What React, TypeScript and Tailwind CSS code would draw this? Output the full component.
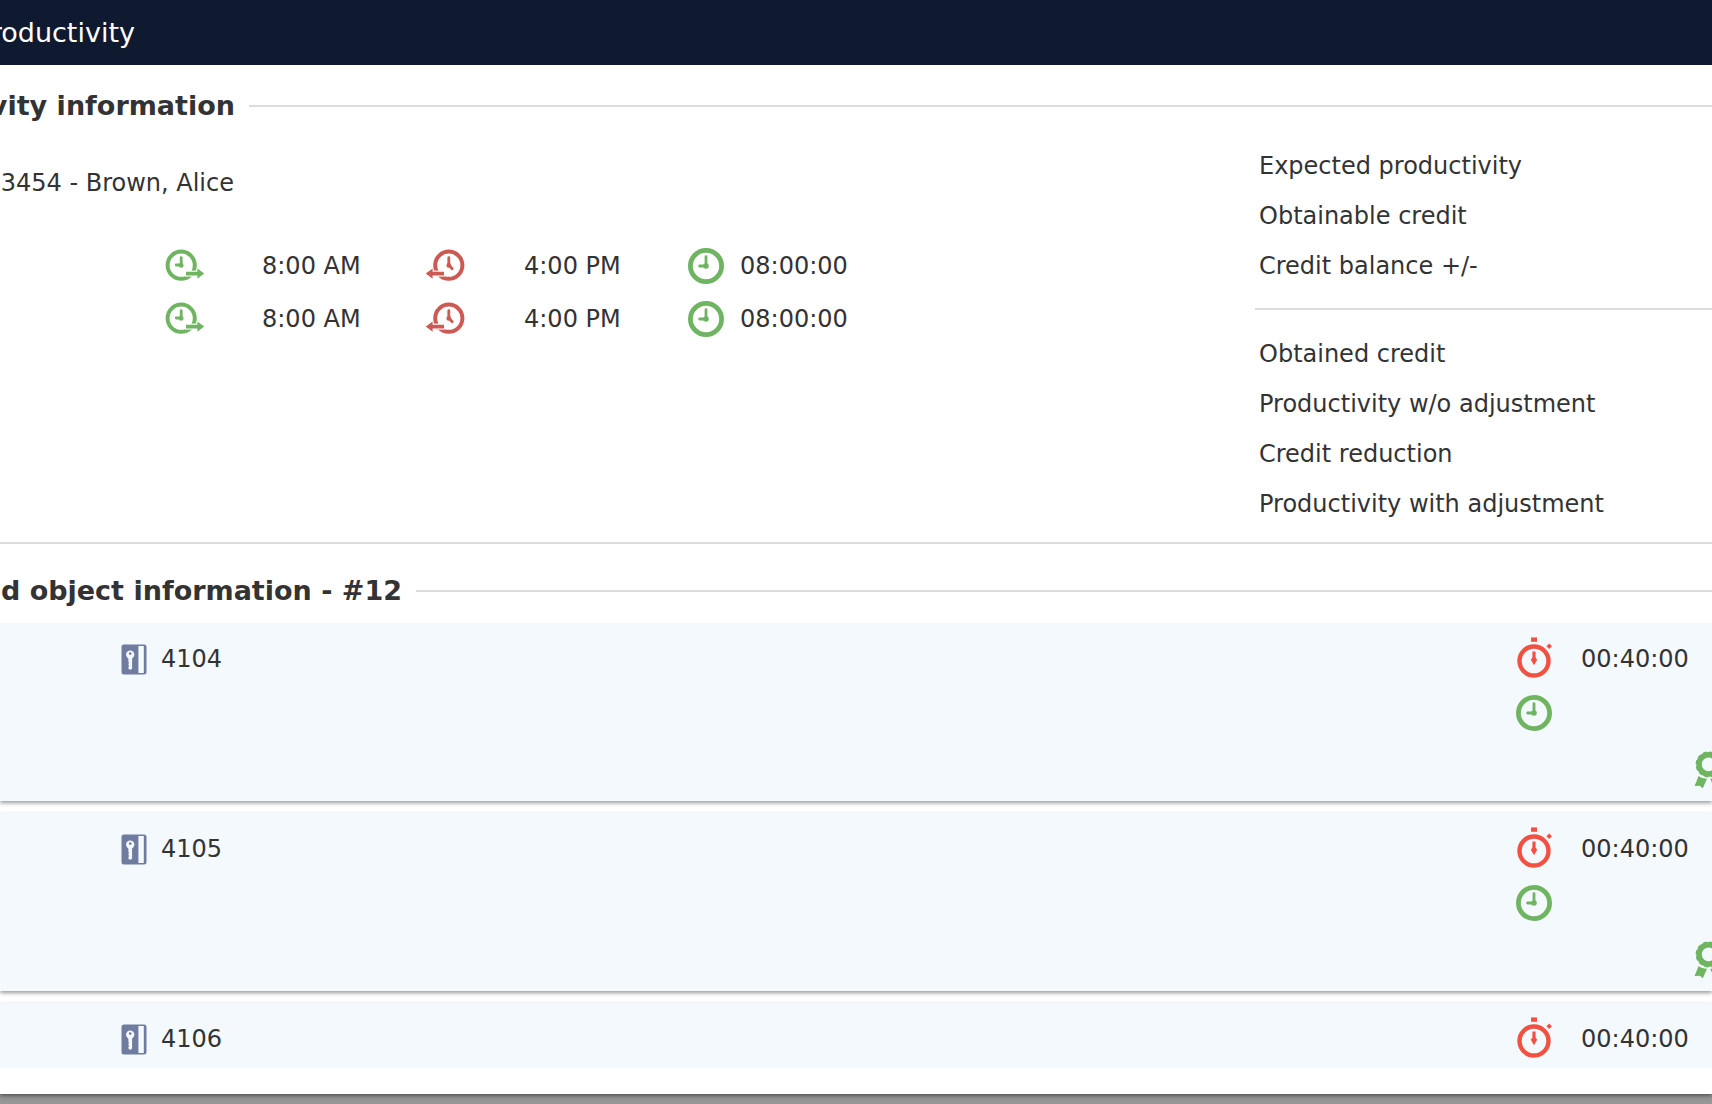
import type { ReactNode } from 'react'

const shifts = [
    { id: 1, start: '8:00 AM', end: '4:00 PM', total: '08:00:00' },
    { id: 2, start: '8:00 AM', end: '4:00 PM', total: '08:00:00' },
]

const expectedLabels = ['Expected productivity', 'Obtainable credit', 'Credit balance +/-']

const obtainedLabels = [
    'Obtained credit',
    'Productivity w/o adjustment',
    'Credit reduction',
    'Productivity with adjustment',
]

const rooms = [
    { number: '4104', time: '00:40:00' },
    { number: '4105', time: '00:40:00' },
    { number: '4106', time: '00:40:00' },
]

const ClockInIcon = () => (
    <svg width="40" height="34" viewBox="0 0 40 34" fill="none" className="text-[#6fb561]">
        <circle cx="16.2" cy="16.2" r="13.6" stroke="currentColor" strokeWidth="4" />
        <path d="M16.2 8.6V16h-5" stroke="currentColor" strokeWidth="2.8" strokeLinecap="round" />
        <circle cx="16.2" cy="16.4" r="2.4" fill="currentColor" />
        <path d="M20 21.6h18v6H20z" fill="white" />
        <path d="M21 22.8h11.4v-3.4l6.8 5.2-6.8 5.2v-3.4H21z" fill="currentColor" />
    </svg>
)

const ClockOutIcon = () => (
    <svg width="40" height="34" viewBox="0 0 40 34" fill="none" className="text-[#cc5a52]">
        <circle cx="23.8" cy="16.2" r="13.6" stroke="currentColor" strokeWidth="4" />
        <path d="M23.8 8.6V16l3.4 3.8" stroke="currentColor" strokeWidth="2.8" strokeLinecap="round" />
        <circle cx="23.8" cy="16.4" r="2.4" fill="currentColor" />
        <path d="M20 21.6H2v6h18z" fill="white" />
        <path d="M19 22.8H7.6v-3.4L.8 24.6l6.8 5.2v-3.4H19z" fill="currentColor" />
    </svg>
)

const ClockIcon = () => (
    <svg width="36" height="36" viewBox="0 0 36 36" fill="none" className="text-[#6fb561]">
        <circle cx="18" cy="18" r="15.6" stroke="currentColor" strokeWidth="4.8" />
        <path d="M18 8.6V18h-6.4" stroke="currentColor" strokeWidth="2.8" strokeLinecap="round" />
        <circle cx="18" cy="18" r="2.8" fill="currentColor" />
    </svg>
)

const StopwatchIcon = () => (
    <svg width="36" height="44" viewBox="0 0 36 44" fill="none" className="text-[#f25142]">
        <circle cx="18" cy="24" r="14.5" stroke="currentColor" strokeWidth="4.4" />
        <path d="M15 .4h6v4.4h-6z" fill="currentColor" />
        <path d="M33.2 6.6l2.8 2.7-2.8 2.7-2.8-2.7z" fill="currentColor" />
        <path d="M16.4 14.4h3.2v6.2l1.6 2.1-1.6 2.7L18 28.2l-1.6-2.8-1.6-2.7 1.6-2.1z" fill="currentColor" />
    </svg>
)

const RoomKeyIcon = () => (
    <svg width="26" height="31" viewBox="0 0 26 31" fill="none">
        <rect x="0.5" y="0.5" width="25" height="30" rx="2.5" fill="#707c9f" />
        <path d="M17.4 2h5.4v27h-5.4z" fill="#f4f8ff" />
        <circle cx="9.2" cy="10.6" r="4.2" fill="#f4f8ff" />
        <circle cx="9.2" cy="9.6" r="1.3" fill="#707c9f" />
        <path d="M7.4 13.5h3.7v11l-1.9 1.4-1.8-1.4v-1.6l.8-.8-.8-1v-1.4l.8-.8-.8-1z" fill="#f4f8ff" />
    </svg>
)

const AwardIcon = () => (
    <svg width="30" height="38" viewBox="0 0 30 38" fill="none" className="shrink-0 text-[#6fb561]">
        <circle cx="14.6" cy="13.4" r="9.6" stroke="currentColor" strokeWidth="5.6" />
        <circle cx="14.6" cy="13.4" r="12.2" stroke="currentColor" strokeWidth="1.6" strokeDasharray="3.9 2.5" />
        <path d="M4.6 25c2.4 1.8 5 2.6 8.4 2.8L8.8 37.2l-3-2.4-5.2.2z" fill="currentColor" />
        <path d="M24.6 25c-2.4 1.8-5 2.6-8.4 2.8l4.2 9.4 3-2.4 5.2.2z" fill="currentColor" />
    </svg>
)

interface SectionHeadingProps {
    children: ReactNode
}

const SectionHeading = ({ children }: SectionHeadingProps) => (
    <div className="flex h-[34px] items-center gap-[14px]">
        <h2 className="shrink-0 overflow-hidden whitespace-nowrap text-[27px] leading-[36px] font-bold">{children}</h2>
        <div className="h-[2px] flex-1 bg-[#dcdcdc]" />
    </div>
)

export default function App() {
    return (
        <div className="h-screen overflow-hidden bg-[#979797] pb-[10px] font-['DejaVu_Sans',Verdana,sans-serif] text-2xl text-[#333333]">
            <main className="flex h-full flex-col bg-white shadow-[0_1px_5px_rgba(0,0,0,0.6)]">
                <header className="flex h-[65px] shrink-0 items-center bg-[#0f1930] text-white">
                    <h1 className="flex w-[135px] justify-end overflow-hidden text-[27px] leading-[34px]">roductivity</h1>
                </header>

                <section className="shrink-0 border-b-2 border-[#dcdcdc] pt-6 pb-[13px]">
                    <SectionHeading>
                        <span className="flex w-[235px] justify-end">vity information</span>
                    </SectionHeading>

                    <div className="flex justify-between pt-[18px]">
                        <div className="pt-[17px]">
                            <p className="flex w-[234px] justify-end overflow-hidden whitespace-nowrap leading-[50px]">
                                3454 - Brown, Alice
                            </p>
                            <div className="pt-[31px]">
                                {shifts.map(shift => (
                                    <div
                                        key={shift.id}
                                        className="grid h-[53px] grid-cols-[97px_163px_99px_164px_52px_auto] items-center pl-[165px]"
                                    >
                                        <ClockInIcon />
                                        <span>{shift.start}</span>
                                        <ClockOutIcon />
                                        <span>{shift.end}</span>
                                        <ClockIcon />
                                        <span>{shift.total}</span>
                                    </div>
                                ))}
                            </div>
                        </div>

                        <div className="w-[457px] leading-[50px]">
                            <ul className="pl-1 pb-[17px]">
                                {expectedLabels.map(label => (
                                    <li key={label}>{label}</li>
                                ))}
                            </ul>
                            <ul className="border-t-2 border-[#dcdcdc] pt-[19px] pl-1">
                                {obtainedLabels.map(label => (
                                    <li key={label}>{label}</li>
                                ))}
                            </ul>
                        </div>
                    </div>
                </section>

                <section className="flex min-h-0 flex-1 flex-col pt-[30px] pb-[26px]">
                    <SectionHeading>
                        <span className="flex w-[402px] justify-end">d object information - #12</span>
                    </SectionHeading>

                    <ul className="mt-[15px] flex min-h-0 flex-1 flex-col gap-3 overflow-hidden">
                        {rooms.map(room => (
                            <li
                                key={room.number}
                                className="flex h-[178px] shrink-0 justify-between overflow-hidden bg-[#f4f9fe] shadow-[0_2px_4px_rgba(0,0,0,0.4)]"
                            >
                                <div className="flex h-[72px] items-center gap-[14px] pl-[121px]">
                                    <RoomKeyIcon />
                                    <span>{room.number}</span>
                                </div>
                                <div className="w-[196px]">
                                    <div className="flex h-[72px] items-center gap-[29px]">
                                        <StopwatchIcon />
                                        <span>{room.time}</span>
                                    </div>
                                    <ClockIcon />
                                    <div className="flex pt-5 pl-[178px]">
                                        <AwardIcon />
                                    </div>
                                </div>
                            </li>
                        ))}
                    </ul>
                </section>
            </main>
        </div>
    )
}
